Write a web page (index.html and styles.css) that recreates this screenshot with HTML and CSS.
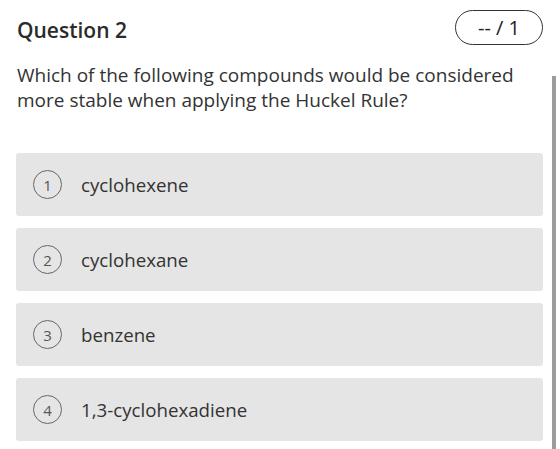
FILE: index.html
```html
<!DOCTYPE html>
<html lang="en">
<head>
    <meta charset="UTF-8">
    <meta name="viewport" content="width=device-width, initial-scale=1.0">
    <title>Question 2</title>
    <link rel="stylesheet" href="styles.css">
</head>
<body>
    <main class="question">
        <header class="question-head">
            <h2>Question 2</h2>
            <span class="score">-- / 1</span>
        </header>
        <p class="prompt">Which of the following compounds would be considered more stable when applying the Huckel Rule?</p>
        <div class="choices">
            <div class="choice"><span class="num">1</span><span>cyclohexene</span></div>
            <div class="choice"><span class="num">2</span><span>cyclohexane</span></div>
            <div class="choice"><span class="num">3</span><span>benzene</span></div>
            <div class="choice"><span class="num">4</span><span>1,3-cyclohexadiene</span></div>
        </div>
    </main>
    <div class="scrollbar"></div>
</body>
</html>
```

FILE: styles.css
```css
body {
    font-family: "Open Sans", "Noto Sans", sans-serif;
    color: #333;
    margin: 0;
    padding: 0;
    background: #fff;
}
.question {
    padding: 10px 17px 0 16px;
}
.question-head {
    display: flex;
    justify-content: space-between;
    align-items: center;
}
.question-head h2 {
    margin: 0 0 0 1px;
    font-size: 21px;
    font-weight: 600;
    color: #2b2b2b;
    padding-top: 4px;
}
.score {
    display: inline-block;
    width: 86px;
    height: 33px;
    line-height: 33px;
    text-align: center;
    border: 1.5px solid #333;
    border-radius: 20px;
    font-size: 20px;
    color: #222;
}
.prompt {
    margin: 18px 0 0 1px;
    max-width: 500px;
    font-size: 19px;
    line-height: 25px;
}
.choices {
    margin-top: 40px;
    display: flex;
    flex-direction: column;
    gap: 12px;
}
.choice {
    display: flex;
    align-items: center;
    gap: 19px;
    height: 63px;
    padding-left: 17px;
    background: #e5e5e5;
    border-radius: 3px;
    font-size: 18.7px;
}
.num {
    width: 27px;
    height: 27px;
    border: 1.5px solid #666;
    border-radius: 50%;
    display: flex;
    align-items: center;
    justify-content: center;
    font-size: 15px;
    color: #555;
}
.scrollbar {
    position: absolute;
    left: 552px;
    top: 76px;
    width: 4px;
    height: 373px;
    background: #9c9c9c;
}
```
